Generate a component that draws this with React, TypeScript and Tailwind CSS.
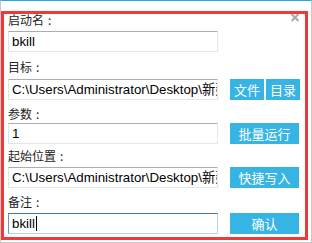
const cjk = "font-['Microsoft_YaHei','Noto_Sans_CJK_SC',sans-serif]"

function Label({ text, className = '' }: { text: string; className?: string }) {
  return (
    <div className={`flex h-[16px] text-[12px] leading-[16px] text-[#222] ${cjk} ${className}`}>
      <span>{text}</span>
      <span className="ml-[4px]">:</span>
    </div>
  )
}

function Field({ value, focused = false }: { value: string; focused?: boolean }) {
  return (
    <div
      className={`flex h-[21px] w-[210px] items-center overflow-hidden whitespace-nowrap border bg-white pl-[3px] font-['Liberation_Sans','Noto_Sans_CJK_SC',sans-serif] text-[13.3px] text-black ${
        focused
          ? 'border-[#b4d4ec] border-t-[#3d7bad] border-l-[#5f99c9]'
          : 'border-[#e3e7ec] border-t-[#abadb3] border-l-[#e2e3ea]'
      }`}
    >
      {value}
      {focused && <span className="ml-px inline-block h-[15px] w-px bg-black" />}
    </div>
  )
}

function Btn({ text, className = '' }: { text: string; className?: string }) {
  return (
    <button
      type="button"
      className={`flex h-[21px] items-center justify-center bg-[#36b5e5] text-[13px] text-white ${cjk} ${className}`}
    >
      {text}
    </button>
  )
}

const path = 'C:\\Users\\Administrator\\Desktop\\新建文件夹\\bkill.exe'

export default function App() {
  return (
    <div className="relative h-[243px] w-[312px] overflow-hidden border border-t-[#2aa9e0] border-x-[#c9c9c9] border-b-[#c9c9c9] bg-white">
      <div className="flex flex-col pl-[7px]">
        <Label text="启动名" className="mt-[11px]" />
        <div className="mt-[3px]">
          <Field value="bkill" />
        </div>

        <Label text="目标" className="mt-[7px]" />
        <div className="mt-[4px] flex items-center">
          <Field value={path} />
          <div className="ml-[12px] flex gap-[2px]">
            <Btn text="文件" className="w-[34px]" />
            <Btn text="目录" className="w-[34px]" />
          </div>
        </div>

        <Label text="参数" className="mt-[6px]" />
        <div className="mt-[1px] flex items-center">
          <Field value="1" />
          <Btn text="批量运行" className="ml-[12px] w-[69px]" />
        </div>

        <Label text="起始位置" className="mt-[4px]" />
        <div className="mt-[3px] flex items-center">
          <Field value={path} />
          <Btn text="快捷写入" className="ml-[12px] w-[69px]" />
        </div>

        <Label text="备注" className="mt-[6px]" />
        <div className="mt-[3px] flex items-center">
          <Field value="bkill" focused />
          <Btn text="确认" className="ml-[12px] w-[69px]" />
        </div>
      </div>

      {/* close */}
      <svg className="absolute left-[289px] top-[12px]" width="10" height="9" viewBox="0 0 10 9">
        <path d="M1.5 1 L8.5 8 M8.5 1 L1.5 8" stroke="#a8a8a8" strokeWidth="2" />
      </svg>

      {/* red annotation frame drawn over the dialog */}
      <div className="pointer-events-none absolute left-[0px] top-[10px] h-[229px] w-[307px] border-[3px] border-[#ef3a3a]" />
    </div>
  )
}
